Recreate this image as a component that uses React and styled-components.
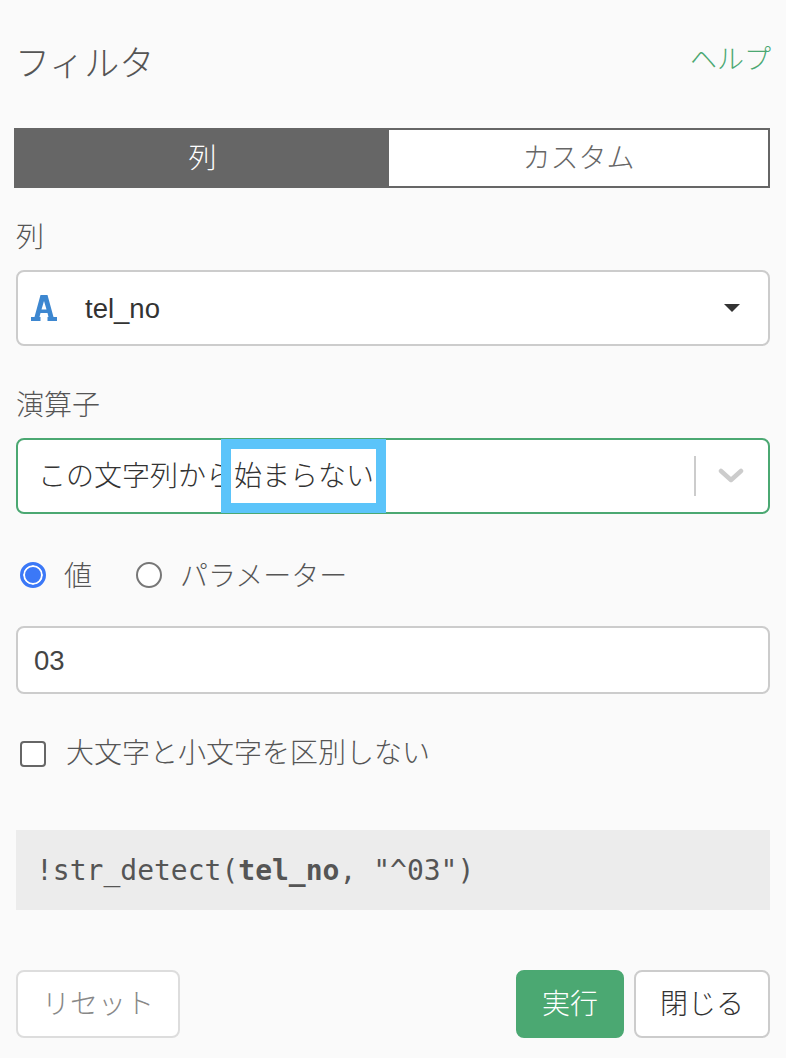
import React from "react";
import styled, { createGlobalStyle } from "styled-components";

const GlobalStyle = createGlobalStyle`
  html, body {
    margin: 0;
    padding: 0;
    background: #fafafa;
  }
  body {
    font-family: "Liberation Sans", "Noto Sans CJK JP", sans-serif;
    color: #444;
  }
`;

const Page = styled.div`
  width: 786px;
  height: 1058px;
  box-sizing: border-box;
  padding: 0 16px;
  display: flex;
  flex-direction: column;
  overflow: hidden;
`;

const Header = styled.div`
  height: 128px;
  display: flex;
  justify-content: space-between;
  align-items: flex-start;
`;

const Title = styled.h1`
  margin: 40px 0 0 -1px;
  font-size: 35px;
  line-height: 48px;
  font-weight: 300;
  color: #555;
`;

const HelpLink = styled.a`
  margin: 41px -1px 0 0;
  font-size: 27px;
  line-height: 38px;
  font-weight: 300;
  color: #4ba872;
`;

const Tabs = styled.div`
  display: flex;
  height: 60px;
  margin-left: -2px;
  box-sizing: border-box;
  border: 2px solid #666;
`;

const Tab = styled.div`
  flex: ${(p) => (p.$active ? "0 0 373px" : "1")};
  display: flex;
  align-items: center;
  justify-content: center;
  padding-bottom: 5px;
  background: ${(p) => (p.$active ? "#666" : "#fff")};
  color: ${(p) => (p.$active ? "#fff" : "#666")};
  font-size: 28px;
  font-weight: 300;
`;

const Label = styled.div`
  margin: ${(p) => p.$top}px 0 13px 0;
  font-size: 28px;
  line-height: 38px;
  font-weight: 300;
  color: #555;
`;

const SelectBox = styled.div`
  position: relative;
  height: 76px;
  box-sizing: border-box;
  display: flex;
  align-items: center;
  background: #fff;
  border: 2px solid ${(p) => (p.$focus ? "#4ba872" : "#ccc")};
  border-radius: 8px;
`;

const TypeIcon = styled.svg`
  width: 26px;
  height: 26px;
  margin-left: 13px;
  flex: none;
`;

const ColumnName = styled.span`
  margin: 2px 0 0 28px;
  font-size: 27.5px;
  color: #333;
  flex: 1;
`;

const Caret = styled.span`
  width: 0;
  height: 0;
  margin-right: 28px;
  border-left: 8px solid transparent;
  border-right: 8px solid transparent;
  border-top: 8px solid #333;
`;

const OperatorText = styled.span`
  margin-left: 20px;
  padding-bottom: 4px;
  font-size: 28px;
  font-weight: 300;
  color: #333;
  flex: 1;
  white-space: nowrap;
`;

const Divider = styled.span`
  width: 2px;
  height: 40px;
  background: #ccc;
`;

const Chevron = styled.svg`
  width: 26px;
  height: 16px;
  margin: 0 24px 0 22px;
`;

const Highlight = styled.div`
  position: absolute;
  left: 203px;
  top: -1px;
  width: 165px;
  height: 74px;
  box-sizing: border-box;
  border: 10px solid #5bc4fa;
`;

const RadioRow = styled.div`
  display: flex;
  align-items: center;
  height: 40px;
  margin-top: 41px;
  padding-left: 4px;
  font-size: 28px;
  font-weight: 300;
  color: #555;
`;

const Radio = styled.span`
  width: 26px;
  height: 26px;
  box-sizing: border-box;
  flex: none;
  border-radius: 50%;
  border: ${(p) => (p.$on ? "3px solid #3b78f7" : "2px solid #777")};
  background: ${(p) => (p.$on ? "#3b78f7" : "#fff")};
  box-shadow: ${(p) => (p.$on ? "inset 0 0 0 2px #fff" : "none")};
`;

const RadioLabel = styled.span`
  margin-left: 18px;
  margin-right: ${(p) => p.$gap}px;
  padding-bottom: 2px;
`;

const ValueInput = styled.div`
  height: 68px;
  margin-top: 31px;
  box-sizing: border-box;
  display: flex;
  align-items: center;
  padding: 2px 0 0 16px;
  background: #fff;
  border: 2px solid #ccc;
  border-radius: 8px;
  font-size: 27.5px;
  color: #444;
`;

const CheckRow = styled.div`
  display: flex;
  align-items: center;
  height: 40px;
  margin-top: 39px;
  padding-left: 4px;
  font-size: 28px;
  font-weight: 300;
  color: #555;
`;

const Checkbox = styled.span`
  width: 26px;
  height: 26px;
  box-sizing: border-box;
  border: 2px solid #666;
  border-radius: 4px;
  background: #fff;
  margin: 2px 20px 0 0;
`;

const CheckText = styled.span`
  padding-bottom: 4px;
`;

const CodeBlock = styled.div`
  height: 80px;
  margin-top: 57px;
  box-sizing: border-box;
  display: flex;
  align-items: center;
  padding-left: 20px;
  background: #ececec;
  font-family: "DejaVu Sans Mono", monospace;
  font-size: 28px;
  color: #555;
  white-space: pre;
  b {
    font-weight: 700;
  }
`;

const Footer = styled.div`
  display: flex;
  gap: 10px;
  margin-top: 60px;
`;

const Button = styled.button`
  height: 68px;
  width: ${(p) => p.$width}px;
  box-sizing: border-box;
  padding: 0 0 4px;
  margin-right: ${(p) => (p.$push ? "auto" : "0")};
  border-radius: 8px;
  border: 2px solid ${(p) => p.$border};
  background: ${(p) => p.$bg};
  color: ${(p) => p.$color};
  font-family: inherit;
  font-size: 28px;
  font-weight: 300;
`;

export default function App() {
  return (
    <Page>
      <GlobalStyle />
      <Header>
        <Title>フィルタ</Title>
        <HelpLink>ヘルプ</HelpLink>
      </Header>

      <Tabs>
        <Tab $active>列</Tab>
        <Tab>カスタム</Tab>
      </Tabs>

      <Label $top={31}>列</Label>
      <SelectBox>
        <TypeIcon viewBox="0 0 26 26">
          <path
            fill="#3d87d0"
            fillRule="evenodd"
            d="M9.500 0h7l6 22h3.500v4h-9.500v-4h1l-1-4H9.500l-1 4h1v4H0v-4h3.500L9.500 0zM13 6l-2.500 8.500h5L13 6z"
          />
        </TypeIcon>
        <ColumnName>tel_no</ColumnName>
        <Caret />
      </SelectBox>

      <Label $top={41}>演算子</Label>
      <SelectBox $focus>
        <OperatorText>この文字列から始まらない</OperatorText>
        <Divider />
        <Chevron viewBox="0 0 26 16">
          <path
            d="M3 3l10 9L23 3"
            fill="none"
            stroke="#ccc"
            strokeWidth="4.500"
            strokeLinecap="round"
            strokeLinejoin="round"
          />
        </Chevron>
        <Highlight />
      </SelectBox>

      <RadioRow>
        <Radio $on />
        <RadioLabel $gap={44}>値</RadioLabel>
        <Radio />
        <RadioLabel $gap={0}>パラメーター</RadioLabel>
      </RadioRow>

      <ValueInput>03</ValueInput>

      <CheckRow>
        <Checkbox />
        <CheckText>大文字と小文字を区別しない</CheckText>
      </CheckRow>

      <CodeBlock>
        !str_detect(<b>tel_no</b>, "^03")
      </CodeBlock>

      <Footer>
        <Button $width={164} $push $border="#ddd" $bg="#fff" $color="#888">
          リセット
        </Button>
        <Button $width={108} $border="#4ba872" $bg="#4ba872" $color="#fff">
          実行
        </Button>
        <Button $width={136} $border="#ccc" $bg="#fff" $color="#333">
          閉じる
        </Button>
      </Footer>
    </Page>
  );
}
